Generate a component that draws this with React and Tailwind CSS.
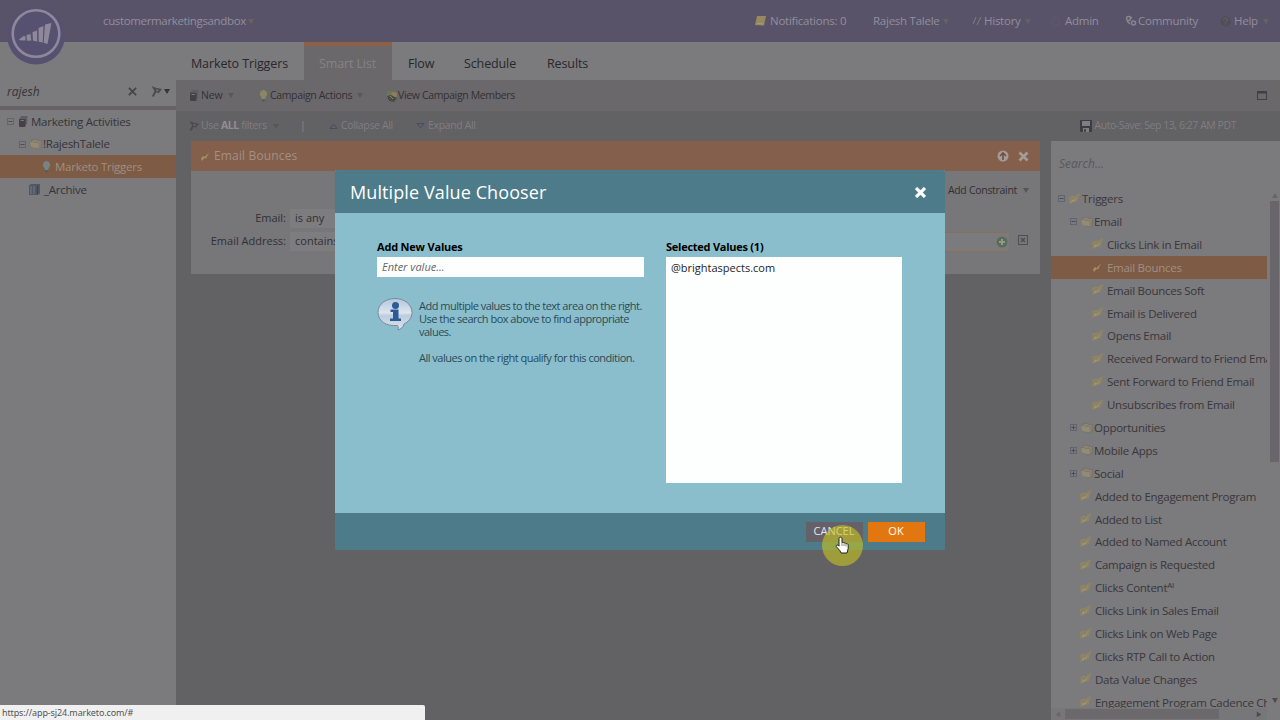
import React from 'react'

function Caret({ className = 'text-[#575459]' }) {
  return (
    <svg className={`w-[6px] h-[5px] shrink-0 ${className}`} viewBox="0 0 6 5" fill="currentColor">
      <path d="M0 0h6L3 5z" />
    </svg>
  )
}

function Toggle({ open }) {
  return (
    <svg className="w-[7px] h-[7px] shrink-0" viewBox="0 0 7 7" fill="none" stroke="#4a4b56">
      <rect x="0.5" y="0.5" width="6" height="6" stroke="#62636c" />
      <path d={open ? 'M1.5 3.5h4' : 'M1.5 3.5h4M3.5 1.5v4'} />
    </svg>
  )
}

function TriggerIcon({ active }) {
  if (active) {
    return (
      <svg className="w-3 h-3 shrink-0" viewBox="0 0 12 12">
        <path d="M2 8.5l2-2.500 1.500 1L10 2.500 7 8.500 5.500 8 3 11z" fill="#a29160" />
      </svg>
    )
  }
  return (
    <svg className="w-3 h-3 shrink-0" viewBox="0 0 12 12">
      <path d="M1 4.500L5.500 3v1.500L11.500.5 9 8.500 6.500 8.800 1.200 11.500z" fill="#8a8268" />
      <path d="M1 4.500L5.500 3v1.500L11.500.5 9 8.500" fill="none" stroke="#96895f" strokeWidth="0.8" />
      <path d="M2.500 10L4 6l1.500 1.500L9.500 3 7 8 5.500 8.500z" fill="#a1966c" />
    </svg>
  )
}

function FolderIcon() {
  return (
    <svg className="w-[13px] h-3 shrink-0" viewBox="0 0 13 12">
      <path d="M2.500 1.800L7 1l1.200 1.200 4.300.3-.5 7.300L8 11 3 8z" fill="#8b8474" stroke="#6f6a5e" strokeWidth="0.6" />
      <path d="M.7 4L3.800 3.200 5 4.500l5 .2.300 6-6.300-.9L1.500 8.500z" fill="#938b78" stroke="#7a7363" strokeWidth="0.6" />
    </svg>
  )
}

function StackIcon() {
  return (
    <svg className="w-[10px] h-[11px] shrink-0" viewBox="0 0 10 11">
      <path d="M3 0h6.500L9 8l-2 1V2H2z" fill="#5f5d62" />
      <rect x="1" y="2.500" width="6.500" height="8.500" rx="1" fill="#434147" />
      <path d="M2.500 4.500h3.500" stroke="#77747a" />
    </svg>
  )
}

function BulbIcon({ color }) {
  return (
    <svg className="w-[9px] h-3 shrink-0" viewBox="0 0 9 12">
      <path d="M4.500 0a4 4 0 0 1 2.300 7L6 9H3L2.200 7A4 4 0 0 1 4.500 0z" fill={color} />
      <path d="M3 9.500h3v1.500l-1.500 1L3 11z" fill="#5b595c" />
    </svg>
  )
}

function ArchiveIcon() {
  return (
    <svg className="w-[11px] h-[11px] shrink-0" viewBox="0 0 11 11">
      <path d="M0 1.500L2 0h9v9.500L9 11H0z" fill="#535663" />
      <path d="M2 2v8M5 2v8" stroke="#747a8b" />
      <path d="M8.500 1.500v9" stroke="#3f424e" />
    </svg>
  )
}

function WrenchIcon({ className }) {
  return (
    <svg className={`shrink-0 ${className}`} viewBox="0 0 11 11">
      <path d="M.5 0l5 2 5.500 1-3.500 4.500-2-1.500-3 5-1.500-1L3.500 5z" fill="#4c4a4d" />
      <path d="M4.500 3.200l3.500.8-2 1.500z" fill="#77757a" />
    </svg>
  )
}

const treeItems = [
  { label: 'Triggers', level: 0, open: true },
  { label: 'Email', level: 1, open: true },
  { label: 'Clicks Link in Email', level: 3 },
  { label: 'Email Bounces', level: 3, active: true },
  { label: 'Email Bounces Soft', level: 3 },
  { label: 'Email is Delivered', level: 3 },
  { label: 'Opens Email', level: 3 },
  { label: 'Received Forward to Friend Email', level: 3 },
  { label: 'Sent Forward to Friend Email', level: 3 },
  { label: 'Unsubscribes from Email', level: 3 },
  { label: 'Opportunities', level: 1, open: false },
  { label: 'Mobile Apps', level: 1, open: false },
  { label: 'Social', level: 1, open: false },
  { label: 'Added to Engagement Program', level: 2 },
  { label: 'Added to List', level: 2 },
  { label: 'Added to Named Account', level: 2 },
  { label: 'Campaign is Requested', level: 2 },
  { label: 'Clicks Content', sup: 'AI', level: 2 },
  { label: 'Clicks Link in Sales Email', level: 2 },
  { label: 'Clicks Link on Web Page', level: 2 },
  { label: 'Clicks RTP Call to Action', level: 2 },
  { label: 'Data Value Changes', level: 2 },
  { label: 'Engagement Program Cadence Changes', level: 2 },
]

const indents = ['pl-[7px]', 'pl-[19px]', 'pl-[28px]', 'pl-[40px]']

function TreeRow({ item }) {
  return (
    <div
      className={`h-[22.9px] shrink-0 flex items-center whitespace-nowrap overflow-hidden text-[11.5px] tracking-[-0.27px] pt-[0.5px] ${indents[item.level]} ${
        item.active ? 'bg-[#7d5b44] text-[#a08f84]' : 'text-[#39373b]'
      }`}
    >
      {item.open !== undefined && <Toggle open={item.open} />}
      <span className={item.open !== undefined ? 'ml-[3px] flex' : 'flex'}>
        {item.level === 1 ? <FolderIcon /> : <TriggerIcon active={item.active} />}
      </span>
      <span className={item.level === 1 ? 'ml-[1px]' : item.level === 0 ? 'ml-[2px]' : 'ml-[4px]'}>
        {item.label}
        {item.sup && <span className="text-[8px] relative -top-[4px]">{item.sup}</span>}
      </span>
    </div>
  )
}

function Header() {
  return (
    <div className="h-[42px] shrink-0 bg-[#585369] text-[#928e9d] text-[11.5px] tracking-[-0.25px] flex items-center whitespace-nowrap">
      <div className="w-[755px] pl-[103px] flex items-center gap-[2px]">
        <span className="tracking-[-0.35px]">customermarketingsandbox</span>
        <Caret className="text-[#68635f]" />
      </div>
      <div className="w-[118px] flex items-center gap-[4px]">
        <svg className="w-[11px] h-[10px]" viewBox="0 0 11 10">
          <path d="M2 0h9L9 9.500 0 9z" fill="#96895f" />
          <path d="M2.500 7.500L8 8" stroke="#aaa072" />
        </svg>
        <span>Notifications: 0</span>
      </div>
      <div className="w-[99px] flex items-center gap-[3px]">
        <span>Rajesh Talele</span>
        <Caret className="text-[#67625e]" />
      </div>
      <div className="w-[78px] flex items-center gap-[2px]">
        <svg className="w-[10px] h-[10px]" viewBox="0 0 10 10" stroke="#817c86" fill="none">
          <path d="M1 8l3-7M5 9l4-8" />
        </svg>
        <span>History</span>
        <Caret className="text-[#67625e] ml-[2px]" />
      </div>
      <div className="w-[75px] flex items-center gap-[4px]">
        <svg className="w-[11px] h-[11px]" viewBox="0 0 11 11" fill="none" stroke="#5e5964" strokeWidth="2" strokeDasharray="2 1">
          <circle cx="5.5" cy="5.5" r="4" />
        </svg>
        <span>Admin</span>
      </div>
      <div className="w-[95px] flex items-center gap-[1px]">
        <svg className="w-3 h-3" viewBox="0 0 12 12" fill="none" stroke="#8a858e" strokeWidth="1.500">
          <circle cx="3.5" cy="3.500" r="2" />
          <circle cx="8.500" cy="8" r="2" />
          <path d="M5 2l2 1M2 6l3 3" />
        </svg>
        <span>Community</span>
      </div>
      <div className="flex items-center gap-[3px]">
        <svg className="w-[11px] h-[11px]" viewBox="0 0 11 11" fill="none">
          <circle cx="5.5" cy="5.500" r="5" fill="#524d58" />
          <path d="M3.500 4c0-2 4-2 4 0 0 1.500-2 1-2 2.500M5.500 7.500v1" stroke="#6a6570" />
        </svg>
        <span>Help</span>
        <Caret className="text-[#67625e] ml-[2px]" />
      </div>
    </div>
  )
}

function Logo() {
  return (
    <svg className="absolute left-[7px] top-[7px] w-[58px] h-[58px]" viewBox="0 0 58 58">
      <circle cx="29" cy="28.500" r="29" fill="#575171" />
      <circle cx="29" cy="26.500" r="23.300" fill="none" stroke="#8d899a" strokeWidth="2.600" />
      <path
        d="M12 32.500l4.500-3.500 2 .5v4l-6-.2zM19.500 28l4-1 .8 6.500-4.300.2zM25.500 25l4.500-1.500.2 11-4.200-.8zM31.500 21l5-2-.8 16.500-4-.8zM38 17.500l6.500-1.500-4 21-3.800-1.200z"
        fill="#8d899a"
      />
    </svg>
  )
}

function Sidebar() {
  return (
    <div className="w-[176px] shrink-0 bg-[#7b7a7d] flex flex-col text-[#363438] text-[11.5px] tracking-[-0.25px] whitespace-nowrap">
      <div className="h-[64px] pt-[35px] flex items-center pl-[7px] shrink-0">
        <span className="italic w-[121px] text-[12px] tracking-normal">rajesh</span>
        <svg className="w-[9px] h-[9px]" viewBox="0 0 10 10" stroke="#464448" strokeWidth="2">
          <path d="M1 1l8 8M9 1L1 9" />
        </svg>
        <WrenchIcon className="w-[11px] h-[11px] ml-[14px]" />
        <Caret className="ml-[2px]" />
      </div>
      <div className="h-[3.5px] shrink-0 bg-[#656367]" />
      <div className="h-[22.9px] flex items-center pl-[7px] pt-[0.5px]">
        <Toggle open />
        <span className="ml-[4px] mr-[3px]"><StackIcon /></span>
        Marketing Activities
      </div>
      <div className="h-[22.9px] flex items-center pl-[19px] pt-[0.5px]">
        <Toggle open />
        <span className="ml-[3px] mr-[1px]"><FolderIcon /></span>
        !RajeshTalele
      </div>
      <div className="h-[22.9px] flex items-center pl-[42px] pt-[0.5px] bg-[#7d5b44] text-[#a08f84]">
        <span className="mr-[4px]"><BulbIcon color="#77828b" /></span>
        Marketo Triggers
      </div>
      <div className="h-[22.9px] flex items-center pl-[29px] pt-[0.5px]">
        <span className="mr-[4px]"><ArchiveIcon /></span>
        _Archive
      </div>
    </div>
  )
}

function Toolbars() {
  return (
    <div className="shrink-0 whitespace-nowrap">
      <div className="h-[38px] bg-[#7b7a7d] text-[#29272b] text-[12.5px] tracking-[-0.12px] flex">
        <div className="w-[128px] pl-[15px] flex items-center pt-[6px]">Marketo Triggers</div>
        <div className="w-[88px] bg-[#6b686b] border-t-4 border-[#8d5f44] text-[#858287] flex items-center justify-center pt-[2px] pr-px">
          Smart List
        </div>
        <div className="w-[56px] pl-[16px] flex items-center pt-[6px]">Flow</div>
        <div className="w-[83px] pl-[16px] flex items-center pt-[6px]">Schedule</div>
        <div className="pl-[16px] flex items-center pt-[6px]">Results</div>
      </div>
      <div className="h-[31px] bg-[#6b686b] text-[#323034] text-[10.5px] tracking-[-0.35px] flex items-center">
        <div className="w-[83px] pl-[13px] flex items-center">
          <StackIcon />
          <span className="ml-[2px] mr-[5px] tracking-[-0.1px]">New</span>
          <Caret className="text-[#5a575b]" />
        </div>
        <div className="w-[127px] flex items-center">
          <BulbIcon color="#8b8765" />
          <span className="ml-[2px] mr-[5px]">Campaign Actions</span>
          <Caret className="text-[#5a575b]" />
        </div>
        <div className="flex items-center">
          <svg className="w-3 h-3" viewBox="0 0 12 12">
            <circle cx="4" cy="4" r="3.500" fill="#6b7656" />
            <circle cx="8" cy="5" r="3" fill="#8c7e5e" />
            <path d="M1 6l4-1 6 3-3 4-5-1z" fill="#4b4a45" />
            <path d="M4 6l3 3" stroke="#928567" />
          </svg>
          <span>View Campaign Members</span>
        </div>
        <svg className="w-[10px] h-[9px] ml-auto mr-[13px]" viewBox="0 0 10 9" fill="none" stroke="#3f3f47">
          <rect x="0.5" y="0.500" width="9" height="8" />
          <path d="M0 1.500h10" strokeWidth="2" />
        </svg>
      </div>
      <div className="h-[30px] bg-[#626164] text-[#807e82] text-[10.5px] tracking-[-0.35px] flex items-center">
        <div className="w-[124px] pl-[13px] flex items-center">
          <WrenchIcon className="w-[10px] h-[10px]" />
          <span className="ml-[2px] mr-[6px]">Use <b className="text-[#918f93]">ALL</b> filters</span>
          <Caret className="text-[#58565a]" />
        </div>
        <span className="w-[29px] text-[#8c8a8e]">|</span>
        <div className="w-[87px] flex items-center gap-[3px]">
          <svg className="w-[9px] h-[6px]" viewBox="0 0 9 6" fill="none" stroke="#464c68"><path d="M1 5.500h7L4.500 1z" /></svg>
          <span>Collapse All</span>
        </div>
        <div className="flex items-center gap-[3px]">
          <svg className="w-[9px] h-[6px]" viewBox="0 0 9 6" fill="none" stroke="#464c68"><path d="M1 .5h7L4.500 5z" /></svg>
          <span>Expand All</span>
        </div>
        <div className="ml-auto mr-[44px] flex items-center gap-[2px]">
          <svg className="w-3 h-3" viewBox="0 0 12 12">
            <rect width="12" height="12" rx="1" fill="#3d3c43" />
            <path d="M2 1h8v5H2zM3 8h6v4H3z" fill="#7f7d82" />
            <path d="M4 9h2v3H4z" fill="#47454b" />
          </svg>
          <span className="tracking-[-0.45px]">Auto-Save: Sep 13, 6:27 AM PDT</span>
        </div>
      </div>
    </div>
  )
}

function FilterCard() {
  return (
    <div className="w-[849px] h-[133px] ml-[15px] shrink-0 bg-[#777679] flex flex-col text-[#323034] text-[11px] whitespace-nowrap">
      <div className="h-[30px] bg-[#845f4b] text-[#a28f86] text-[12px] tracking-[0.15px] flex items-center pl-[8px] pr-[11px]">
        <TriggerIcon active />
        <span className="ml-[3px]">Email Bounces</span>
        <svg className="w-3 h-3 ml-auto" viewBox="0 0 12 12">
          <circle cx="6" cy="6" r="5.500" fill="#a49b97" />
          <path d="M6 10V3M3 6l3-3 3 3" fill="none" stroke="#70513f" strokeWidth="1.600" />
        </svg>
        <svg className="w-[11px] h-[11px] ml-[9px]" viewBox="0 0 11 11" stroke="#a49b97" strokeWidth="2.800">
          <path d="M1.500 1.500l8 8M9.500 1.500l-8 8" />
        </svg>
      </div>
      <div className="h-[38px] flex items-center justify-end gap-[6px] pr-[11px] pt-px">
        <Caret className="-mr-[3px]" />
        <span className="text-[10.5px] tracking-[-0.3px]">Add Constraint</span>
        <Caret />
      </div>
      <div className="h-[19px] flex items-center">
        <span className="w-[95px] text-right mr-[4px]">Email:</span>
        <span className="w-[120px] h-[19px] bg-[#7d7c7f] pl-[5px] flex items-center">is any</span>
      </div>
      <div className="h-[19px] mt-[4px] flex items-center">
        <span className="w-[95px] text-right mr-[4px]">Email Address:</span>
        <span className="w-[120px] h-[19px] bg-[#7d7c7f] pl-[5px] flex items-center">contains</span>
        <span className="ml-auto w-[200px] h-[20px] border border-[#8c6f58] bg-[#7b7a7d] flex items-center justify-end pr-px">
          <svg className="w-3 h-3" viewBox="0 0 12 12">
            <circle cx="6" cy="6" r="5.500" fill="#5a6b57" />
            <path d="M6 3v6M3 6h6" stroke="#8e9a88" strokeWidth="2" />
          </svg>
        </span>
        <svg className="w-[10px] h-[10px] ml-[8px] mr-[12px] -mt-[4px]" viewBox="0 0 10 10" fill="none" stroke="#504e53">
          <rect x="0.500" y="0.500" width="9" height="9" />
          <path d="M3 3l4 4M7 3L3 7" strokeWidth="1.500" />
        </svg>
      </div>
    </div>
  )
}

function TriggerPanel() {
  return (
    <div className="w-[229px] ml-auto bg-[#7b7a7d] flex flex-col overflow-hidden">
      <div className="h-[46px] shrink-0 pl-[8px] flex items-center italic text-[12px] text-[#5a585c]">Search...</div>
      <div className="flex-1 min-h-0 flex">
        <div className="w-[216px] flex flex-col overflow-hidden">
          <div className="flex-1 min-h-0 overflow-hidden flex flex-col">
            {treeItems.map(item => (
              <TreeRow key={item.label} item={item} />
            ))}
          </div>
          <div className="h-[12px] shrink-0 bg-[#777679] flex items-center">
            <Caret className="ml-[4px] rotate-90 text-[#69676b]" />
            <div className="ml-[4px] w-[154px] h-[10px] bg-[#6b696c]" />
            <Caret className="ml-auto mr-[5px] -rotate-90 text-[#4d4b4f]" />
          </div>
        </div>
        <div className="w-[13px] pl-[2px] flex flex-col items-center">
          <Caret className="mt-[6px] mb-[3px] rotate-180 text-[#67656a]" />
          <div className="w-[9px] h-[261px] bg-[#68666a]" />
          <Caret className="mt-auto mb-[17px] text-[#4d4b4f]" />
        </div>
      </div>
    </div>
  )
}

function ValueChooser() {
  return (
    <div className="absolute left-[335px] top-[170px] w-[609.500px] h-[380px] bg-[#8bbecc] flex flex-col whitespace-nowrap rounded-t-[2px] overflow-hidden">
      <div className="h-[43px] shrink-0 bg-[#4d7b8a] flex items-center justify-between pl-[15px] pr-[19px] pt-[2px]">
        <span className="text-white text-[18px] tracking-[0.1px]">Multiple Value Chooser</span>
        <svg className="w-[11px] h-[11px]" viewBox="0 0 11 11" stroke="#fff" strokeWidth="3.200">
          <path d="M1 1l9 9M10 1l-9 9" />
        </svg>
      </div>
      <div className="flex-1 flex pl-[42px] pt-[26px] text-[11px]">
        <div className="w-[267px]">
          <div className="h-[18px] leading-[16px] font-bold text-black tracking-[-0.2px]">Add New Values</div>
          <div className="h-[20px] bg-[#fdfefe] pl-[5px] pt-px flex items-center italic text-[#666]">Enter value...</div>
          <div className="flex mt-[20px]">
            <svg className="w-[36px] h-[34px] shrink-0" viewBox="0 0 36 34">
              <defs>
                <linearGradient id="bubble" x1="0" y1="0" x2="0" y2="1">
                  <stop offset="0" stopColor="#b3c6da" />
                  <stop offset="0.45" stopColor="#dde5ef" />
                  <stop offset="0.55" stopColor="#bdccdc" />
                  <stop offset="1" stopColor="#dce5ee" />
                </linearGradient>
              </defs>
              <path
                d="M18 1.500C27.500 1.500 35 7.500 35 15.500c0 6-4 9.500-8 11.500-.5 3-3 5-6 6 .5-1.500.5-3.500-.5-4.500C9 29.500 1 24 1 15.500S8.500 1.500 18 1.500z"
                fill="url(#bubble)"
                stroke="#748b9c"
              />
              <circle cx="18.500" cy="8.500" r="3.500" fill="#2c5b96" />
              <path d="M13.500 12.500H21.500v9h2.500V24H13v-2.500h3V15h-2.500z" fill="#2c5b96" />
            </svg>
            <div className="ml-[6px] text-[#294b57] text-[11px] leading-[13px] pt-[2px] tracking-[-0.5px]">
              Add multiple values to the text area on the right.<br />
              Use the search box above to find appropriate<br />
              values.<br />
              <br />
              All values on the right qualify for this condition.
            </div>
          </div>
        </div>
        <div className="ml-[22px] w-[236px]">
          <div className="h-[18px] leading-[16px] font-bold text-black tracking-[-0.25px]">Selected Values (1)</div>
          <div className="h-[226px] bg-[#fdfefe] pl-[5px] pt-[3px] text-[#1d1d1d]">@brightaspects.com</div>
        </div>
      </div>
      <div className="h-[37px] shrink-0 bg-[#4d7b8a] text-white text-[11px] flex items-center justify-end pr-[20px] gap-[5px]">
        <button className="w-[57px] h-[20px] bg-[#656168] text-[#e8e6f0]">CANCEL</button>
        <button className="w-[57px] h-[20px] bg-[#e2770f]">OK</button>
      </div>
    </div>
  )
}

function Pointer() {
  return (
    <div className="absolute left-[822px] top-[525px] w-[41px] h-[41px] rounded-full bg-[#c8c41c]/60">
      <svg className="absolute left-[13px] top-[11px] w-[16px] h-[18px]" viewBox="0 0 16 18">
        <path
          d="M5.500 1.200c1 0 1.500.7 1.500 1.500v4c.8-.6 1.700-.4 2 .4.800-.4 1.700-.2 2 .6 1-.3 2.200.2 2.200 1.500v3.300L12 17H6l-1-2.200L1.200 10.500c-.5-.8.8-2 1.800-1.300l1 1V2.700c0-.8.5-1.500 1.500-1.500z"
          fill="#fff"
          stroke="#222"
        />
        <path d="M7 7v3M9 7.500V10M11 8v2.500" stroke="#555" strokeWidth="0.700" />
      </svg>
    </div>
  )
}

export default function App() {
  return (
    <div className="relative w-[1280px] h-[720px] overflow-hidden bg-[#626164] flex flex-col font-['Open_Sans',sans-serif]">
      <Header />
      <div className="flex-1 min-h-0 flex">
        <Sidebar />
        <div className="flex-1 min-w-0 flex flex-col">
          <Toolbars />
          <div className="flex-1 min-h-0 flex">
            <FilterCard />
            <TriggerPanel />
          </div>
        </div>
      </div>
      <Logo />
      <ValueChooser />
      <Pointer />
      <div className="absolute left-0 bottom-0 w-[425px] h-[15px] bg-[#f0f0f0] rounded-tr-[2px] pl-[2px] text-[9px] leading-[15px] tracking-[-0.12px] text-[#555] font-['Noto_Sans',sans-serif]">
        https://app-sj24.marketo.com/#
      </div>
    </div>
  )
}
